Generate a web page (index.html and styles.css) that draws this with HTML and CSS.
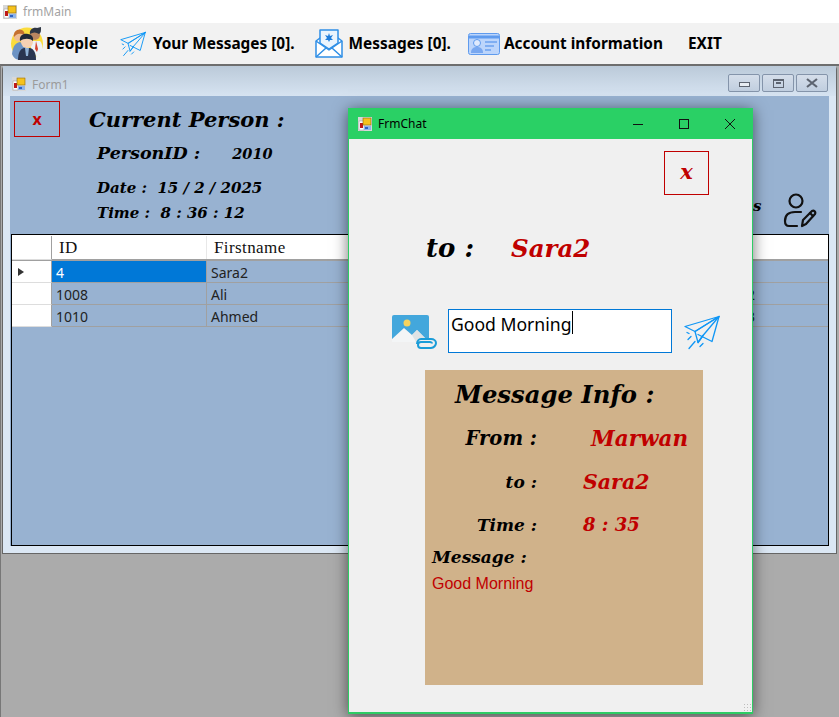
FILE: index.html
```html
<!DOCTYPE html>
<html>
<head>
    <title>frmMain</title>
    <link rel="stylesheet" href="styles.css">
</head>
<body>
    <svg class="defs" width="0" height="0">
        <symbol id="app" viewBox="0 0 14 14">
            <rect x="0" y="0" width="14" height="14" fill="#d8d8d8"/>
            <rect x="1" y="4" width="5" height="9" fill="#fff" stroke="#999" stroke-width="0.5"/>
            <rect x="2" y="6" width="3" height="5" fill="#c01818"/>
            <rect x="5" y="1" width="8" height="7" fill="#f6c21c" stroke="#8a6a10" stroke-width="0.6"/>
            <rect x="6" y="9" width="7" height="4" fill="#8fb4ea"/>
            <rect x="7" y="10" width="3" height="2" fill="#2d62c4"/>
        </symbol>
        <symbol id="plane" viewBox="0 0 36 34">
            <g fill="none" stroke="#0f96f5" stroke-width="1.3" stroke-linejoin="round" stroke-linecap="round">
                <path d="M35 1 1 11l10 5z"/>
                <path d="M35 1 11 16l3 11 5-7z"/>
                <path d="M35 1 28 26l-14-7"/>
                <path d="M19 20l-5 7"/>
                <path d="M7 21l-3 3M11 26l-6 7M19 28l-3 3M3 17l2 1"/>
            </g>
        </symbol>
    </svg>

    <div class="app-title">
        <svg class="app-icon"><use href="#app"/></svg>
        <span>frmMain</span>
    </div>

    <nav class="menu">
        <a class="menu-item item-people">
            <svg class="menu-icon" width="33" height="33" viewBox="0 0 33 33">
                <circle cx="17" cy="16.500" r="16" fill="#fbdc3c"/>
                <path d="M2 27c1-8 3-11 8-12l6 4v14H10C6 33 3 30 2 27z" fill="#6c93c4"/>
                <circle cx="9" cy="9" r="5.500" fill="#eebd96"/>
                <path d="M4 10C3 4 8 1 12 3c2 1 3 3 2 5-3-2-6-1-8 0z" fill="#c5702f"/>
                <path d="M21 14h9c2 2 3 6 2 10l-5 6-6-8z" fill="#eef2f6"/>
                <path d="M26 14l2 8-1 3-2-3z" fill="#d64530"/>
                <circle cx="25" cy="8" r="5" fill="#b98560"/>
                <path d="M20 7c-1-4 3-7 7-6l4-1c0 4 0 6-2 7-3-2-6-2-9 0z" fill="#2e3644"/>
                <path d="M8 33c0-7 2-11 6-12h6c4 1 6 5 6 12z" fill="#2a3550"/>
                <path d="M15 21h4l-1 8h-2z" fill="#8fb1d6"/>
                <circle cx="17" cy="15" r="6" fill="#f6d1b4"/>
                <path d="M10 14c-1-6 4-8 8-7 3 0 6 3 5 7-3-3-9-3-13 0z" fill="#222a38"/>
            </svg>
            People
        </a>
        <a class="menu-item item-yours">
            <svg class="menu-icon" width="26" height="26"><use href="#plane"/></svg>
            Your Messages [0].
        </a>
        <a class="menu-item item-messages">
            <svg class="menu-icon" width="28" height="29" viewBox="0 0 28 29">
                <g fill="#fff" stroke="#2f8fe6" stroke-width="1.500" stroke-linejoin="round">
                    <path d="M1 12v16h26V12l-4-3H5z"/>
                    <path d="M5 14V1h18v13l-9 6z" fill="#eaf4fd"/>
                    <path d="M1 12l13 9 13-9M1 28l10-9M27 28l-10-9" fill="none"/>
                </g>
                <path d="M14 4l1 3 3-1-2 3 2 2-3 0-1 2-1-2-3 0 2-2-2-3 3 1z" fill="#1f7ddb"/>
            </svg>
            Messages [0].
        </a>
        <a class="menu-item item-account">
            <svg class="menu-icon" width="32" height="22" viewBox="0 0 32 22">
                <rect x="0.500" y="0.500" width="31" height="21" rx="2" fill="#bcd5fb" stroke="#5f9bee"/>
                <path d="M1 4h30" stroke="#5f9bee" stroke-width="3"/>
                <circle cx="9" cy="10" r="3.500" fill="#dfeafd" stroke="#5f9bee"/>
                <path d="M3 20c0-5 3-6 6-6s6 1 6 6z" fill="#79a8f0"/>
                <path d="M17 9h12M17 13h9M17 17h6" stroke="#6ba1f0" stroke-width="1.500"/>
            </svg>
            Account information
        </a>
        <a class="menu-item item-exit">EXIT</a>
    </nav>

    <main class="mdi">
        <!-- parent form -->
        <section class="form1">
            <div class="form1-title">
                <svg class="app-icon"><use href="#app"/></svg>
                <span>Form1</span>
                <div class="mdi-buttons">
                    <button class="mdi-btn"><i class="glyph-min"></i></button>
                    <button class="mdi-btn"><i class="glyph-max"></i></button>
                    <button class="mdi-btn">
                        <svg width="12" height="10" viewBox="0 0 12 10"><path d="M1 1l10 8M11 1 1 9" stroke="#5d6470" stroke-width="2.200" fill="none"/></svg>
                    </button>
                </div>
            </div>

            <div class="form1-body">
                <div class="person-bar">
                    <button class="close-btn">x</button>
                    <div class="person-info">
                        <h1>Current Person :</h1>
                        <p class="person-id"><span>PersonID :</span><span class="person-num">2010</span></p>
                        <p class="person-date">Date : &nbsp;15 / 2 / 2025</p>
                        <p class="person-time">Time : &nbsp;8 : 36 : 12</p>
                    </div>
                    <span class="hidden-label">s</span>
                    <svg class="edit-user" width="34" height="35" viewBox="0 0 34 35">
                        <g fill="none" stroke="#111" stroke-width="2.200" stroke-linecap="round" stroke-linejoin="round">
                            <circle cx="13" cy="8" r="6.500"/>
                            <path d="M14 33H6c-3 0-4-2-4-5 0-6 4-9 10-9h6"/>
                            <path d="M19 33l1-6 9-9c2-1 4 1 3 3l-9 10z"/>
                            <path d="M27 20l3 3"/>
                        </g>
                    </svg>
                </div>

                <div class="grid">
                    <div class="grid-row grid-head">
                        <div class="row-head"></div>
                        <div class="cell col-id">ID</div>
                        <div class="cell col-name">Firstname</div>
                    </div>
                    <div class="grid-row">
                        <div class="row-head"><i class="row-arrow"></i></div>
                        <div class="cell col-id selected">4</div>
                        <div class="cell col-name">Sara2</div>
                        <div class="cell col-last">1</div>
                    </div>
                    <div class="grid-row">
                        <div class="row-head"></div>
                        <div class="cell col-id">1008</div>
                        <div class="cell col-name">Ali</div>
                        <div class="cell col-last">2</div>
                    </div>
                    <div class="grid-row">
                        <div class="row-head"></div>
                        <div class="cell col-id">1010</div>
                        <div class="cell col-name">Ahmed</div>
                        <div class="cell col-last">3</div>
                    </div>
                </div>
            </div>
        </section>

        <!-- chat form, on top -->
        <section class="chat">
            <div class="chat-title">
                <svg class="app-icon"><use href="#app"/></svg>
                <span class="chat-name">FrmChat</span>
                <svg class="win-btn" width="12" height="12" viewBox="0 0 12 12"><path d="M1 6.500h10" stroke="#111"/></svg>
                <svg class="win-btn" width="12" height="12" viewBox="0 0 12 12"><rect x="1.500" y="1.500" width="9" height="9" fill="none" stroke="#111"/></svg>
                <svg class="win-btn" width="12" height="12" viewBox="0 0 12 12"><path d="M1 1l10 10M11 1 1 11" stroke="#111"/></svg>
            </div>

            <div class="chat-body">
                <div class="chat-close"><button class="close-btn big">x</button></div>

                <div class="to-row">
                    <span class="to-label">to :</span>
                    <span class="to-name">Sara2</span>
                </div>

                <div class="send-row">
                    <svg class="attach" width="45" height="35" viewBox="0 0 45 35">
                        <rect x="0" y="0" width="37" height="27" rx="2" fill="#43a7dc"/>
                        <path d="M0 27V24l12-11 8 7 5-5 12 12z" fill="#f3f5f6"/>
                        <path d="M20 20l5-5 12 12H24z" fill="#dfe3e5"/>
                        <circle cx="15" cy="8" r="3.500" fill="#f7d35e"/>
                        <path d="M25 29c0-3 2-5 4-5h10c3 0 5 2 5 4s-2 5-5 5H29c-2 0-3-1-3-3s1-3 3-3h9c1 0 2 1 2 1.500" fill="#f0f0f0" stroke="#1a9cd8" stroke-width="2"/>
                    </svg>
                    <div class="msg-input">Good Morning<i class="caret"></i></div>
                    <svg class="send" width="36" height="35"><use href="#plane"/></svg>
                </div>

                <div class="info">
                    <h2>Message Info :</h2>
                    <dl class="info-list">
                        <dt class="row-from">From :</dt><dd class="val-from">Marwan</dd>
                        <dt class="row-to">to :</dt><dd class="val-to">Sara2</dd>
                        <dt class="row-time">Time :</dt><dd class="val-time">8 : 35</dd>
                    </dl>
                    <h3>Message :</h3>
                    <p class="info-text">Good Morning</p>
                </div>
                <span class="grip"></span>
            </div>
        </section>
    </main>
</body>
</html>
```

FILE: styles.css
```css
* {
    box-sizing: border-box;
}

html, body {
    height: 100%;
}

body {
    margin: 0;
    overflow: hidden;
    background-color: #ffffff;
    font-family: "Noto Sans", sans-serif;
    color: #000000;
    display: flex;
    flex-direction: column;
}

.defs {
    position: absolute;
}

h1, h2, h3, p, dl, dd {
    margin: 0;
}

button {
    font: inherit;
    padding: 0;
}

.app-icon {
    width: 14px;
    height: 14px;
    flex: none;
}

/* top window title */
.app-title {
    height: 23px;
    flex: none;
    display: flex;
    align-items: center;
    gap: 6px;
    padding-left: 3px;
    font-size: 12px;
    color: #a3a3a3;
}

/* menu strip */
.menu {
    height: 41px;
    flex: none;
    display: flex;
    align-items: center;
    padding-left: 10px;
    background-color: #f2f2f2;
    font-size: 15.400px;
    font-weight: 700;
}

.menu-item {
    display: flex;
    align-items: center;
    white-space: nowrap;
}

.menu-icon {
    flex: none;
    margin-right: 3px;
}

.item-yours {
    margin-left: 22px;
}

.item-yours .menu-icon {
    margin-right: 7px;
}

.item-messages {
    margin-left: 20px;
}

.item-messages .menu-icon {
    margin-right: 6px;
}

.item-account {
    margin-left: 17px;
}

.item-account .menu-icon {
    margin-right: 4px;
}

.item-exit {
    margin-left: 25px;
}

/* mdi client area */
.mdi {
    position: relative;
    flex: 1;
    background-color: #ababab;
    border-top: 2px solid #6e6e6e;
    border-left: 1px solid #777777;
}

.form1 {
    position: absolute;
    left: 1px;
    top: 0;
    width: 835px;
    height: 488px;
    display: flex;
    flex-direction: column;
    background-color: #dbe7f4;
    border: 1px solid #666666;
    border-top: 0;
    border-radius: 4px 4px 0 0;
    padding: 0 7px 7px 7px;
}

.form1-title {
    height: 30px;
    flex: none;
    display: flex;
    align-items: center;
    gap: 6px;
    margin: 0 -7px;
    padding: 6px 0 0 9px;
    background: linear-gradient(#bbcad9, #d6e3f1);
    font-size: 12px;
    color: #9b9b9b;
}

.mdi-buttons {
    display: flex;
    gap: 2px;
    margin-left: auto;
    margin-right: 8px;
    margin-top: -2px;
}

.mdi-btn {
    width: 32px;
    height: 18px;
    display: flex;
    align-items: center;
    justify-content: center;
    background: linear-gradient(#d5deea, #c0cedf);
    border: 1px solid #8494aa;
    border-radius: 2px;
}

.glyph-min {
    width: 11px;
    height: 5px;
    margin-top: 3px;
    background-color: #e8edf3;
    border: 1px solid #5d6470;
}

.glyph-max {
    width: 11px;
    height: 9px;
    border: 1px solid #5d6470;
    border-top-width: 2px;
    position: relative;
}

.glyph-max::after {
    content: "";
    position: absolute;
    left: 2px;
    top: 1px;
    width: 5px;
    height: 2px;
    background-color: #5d6470;
}

.form1-body {
    flex: 1;
    display: flex;
    flex-direction: column;
    background-color: #98b2d1;
}

/* fake blackletter headings */
.person-info,
.info,
.to-row,
.close-btn.big {
    font-family: "DejaVu Serif", serif;
    font-style: italic;
    font-weight: 700;
}

.person-bar {
    position: relative;
    height: 138px;
    flex: none;
    display: flex;
    padding: 5px 0 0 4px;
}

.close-btn {
    width: 46px;
    height: 36px;
    flex: none;
    background: transparent;
    border: 1px solid #c00000;
    color: #c00000;
    font-size: 16px;
    font-weight: 700;
    font-family: "Noto Sans", sans-serif;
}

.close-btn.big {
    width: 45px;
    height: 44px;
    font-size: 21px;
    padding-bottom: 4px;
    font-family: "DejaVu Serif", serif;
}

.person-info {
    margin-left: 29px;
    font-size: 15px;
}

.person-info h1 {
    font-size: 21px;
    line-height: 30px;
    margin-top: 4px;
}

.person-id {
    display: flex;
    align-items: baseline;
    gap: 32px;
    margin: 6px 0 0 8px;
    font-size: 17.500px;
    line-height: 24px;
}

.person-num {
    font-size: 14.500px;
}

.person-date {
    margin: 10px 0 0 8px;
    line-height: 24px;
}

.person-time {
    margin: 1px 0 0 8px;
    line-height: 24px;
}

.hidden-label {
    position: absolute;
    left: 743px;
    top: 101px;
    font: 700 italic 15px "DejaVu Serif", serif;
}

.edit-user {
    position: absolute;
    left: 773px;
    top: 97px;
}

/* people table */
.grid {
    flex: 1;
    margin-left: 1px;
    border: 1px solid #000000;
    font-size: 14px;
    color: #222222;
}

.grid-row {
    height: 22px;
    display: flex;
    border-bottom: 1px solid #a0a0a0;
}

.grid-head {
    height: 26px;
    background-color: #ffffff;
    border-bottom: 2px solid #a0a0a0;
    border-top: 1px solid #ffffff;
    font-family: "Liberation Serif", serif;
    font-size: 17px;
    letter-spacing: 0.4px;
    color: #111111;
}

.row-head {
    width: 40px;
    flex: none;
    display: flex;
    align-items: center;
    padding-left: 6px;
    background-color: #ffffff;
    border-right: 1px solid #a0a0a0;
    margin-bottom: -1px;
    border-bottom: 1px solid #dddddd;
}

.row-arrow {
    width: 0;
    height: 0;
    border: 4px solid transparent;
    border-left: 6px solid #333333;
    border-right: 0;
}

.cell {
    display: flex;
    align-items: center;
    padding: 1px 0 0 4px;
    border-right: 1px solid #a0a0a0;
}

.col-id {
    width: 155px;
    flex: none;
}

.col-name {
    flex: 1;
    border-right: 0;
}

.col-last {
    width: 81px;
    flex: none;
    padding-left: 0;
    border-right: 0;
}

.grid-head .col-id,
.grid-head .col-name {
    padding-left: 7px;
    border-right-color: #e8e8e8;
}

.selected {
    background-color: #0078d7;
    color: #ffffff;
}

/* chat window */
.chat {
    position: absolute;
    left: 347px;
    top: 42px;
    width: 405px;
    height: 606px;
    display: flex;
    flex-direction: column;
    background-color: #f0f0f0;
    border: 1px solid #2ecc64;
    border-width: 0 1px 2px 1px;
    box-shadow: 0 2px 14px rgba(0, 0, 0, 0.55);
}

.chat-title {
    height: 31px;
    flex: none;
    display: flex;
    align-items: center;
    margin: 0 -1px;
    padding: 0 17px 0 10px;
    background-color: #2ad065;
    font-size: 12px;
}

.chat-name {
    margin-left: 6px;
    margin-right: auto;
}

.win-btn {
    margin-left: 34px;
}

.chat-body {
    position: relative;
    flex: 1;
}

.chat-close {
    display: flex;
    justify-content: flex-end;
    padding: 12px 43px 0 0;
}

.to-row {
    display: flex;
    align-items: baseline;
    margin: 38px 0 0 77px;
    height: 42px;
}

.to-label {
    font-size: 26px;
    width: 85px;
    color: #000000;
}

.to-name {
    font-size: 24.500px;
    color: #c00000;
}

.send-row {
    display: flex;
    align-items: flex-start;
    margin: 34px 0 0 43px;
}

.attach {
    margin-top: 6px;
    flex: none;
}

.msg-input {
    width: 224px;
    height: 44px;
    margin-left: 11px;
    padding: 1px 2px;
    background-color: #ffffff;
    border: 1px solid #0078d7;
    font-size: 17.600px;
    line-height: 26px;
}

.caret {
    display: inline-block;
    width: 1px;
    height: 23px;
    margin-left: 1px;
    vertical-align: top;
    background-color: #000000;
}

.send {
    margin: 6px 0 0 12px;
    flex: none;
}

/* message info panel */
.info {
    width: 278px;
    height: 315px;
    margin: 17px 0 0 76px;
    padding: 9px 0 0 7px;
    background-color: #d0b28a;
}

.info h2 {
    margin-left: 23px;
    font-size: 24.300px;
    line-height: 32px;
}

.info-list {
    display: grid;
    grid-template-columns: 105px 1fr;
    column-gap: 46px;
    margin-top: 15px;
    font-size: 17px;
}

.info-list dt {
    text-align: right;
    line-height: 26px;
    height: 43px;
}

.info-list .row-from {
    font-size: 19.500px;
}

.info-list dd {
    color: #c00000;
    line-height: 26px;
}

.val-from {
    margin-left: 8px;
    font-size: 21.500px;
}

.val-to {
    font-size: 20.500px;
}

.val-time {
    font-size: 18px;
}

.info h3 {
    margin-top: -11px;
    font-size: 17px;
    line-height: 26px;
}

.info-text {
    margin-top: 5px;
    font-family: "Liberation Sans", sans-serif;
    font-style: normal;
    font-weight: 400;
    font-size: 16px;
    color: #c00000;
}

.grip {
    position: absolute;
    right: 1px;
    bottom: 1px;
    width: 8px;
    height: 8px;
    background-image: radial-gradient(#bdbdbd 1px, transparent 1px);
    background-size: 3px 3px;
}
```
